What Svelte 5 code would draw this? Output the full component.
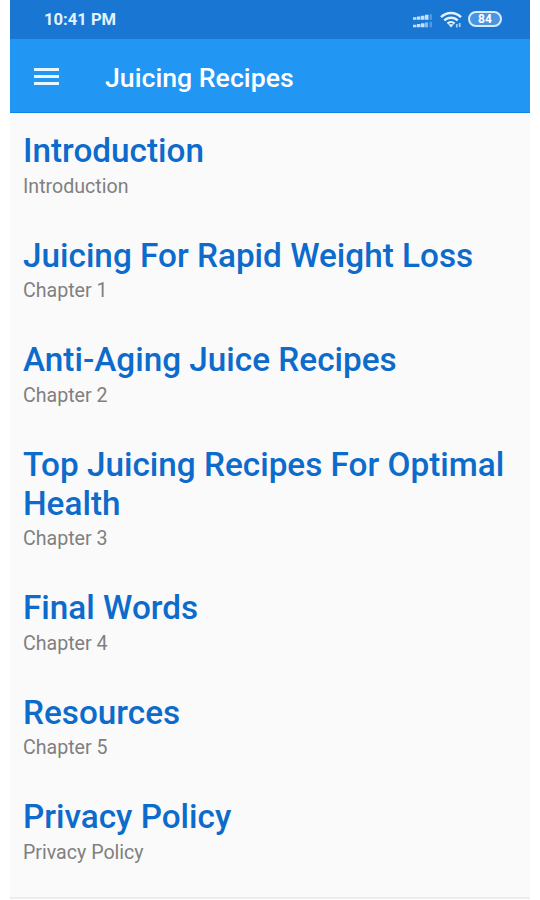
<script lang="ts">
    interface Chapter {
        title: string;
        subtitle: string;
    }

    const battery = 84;

    const chapters: Chapter[] = [
        { title: 'Introduction', subtitle: 'Introduction' },
        { title: 'Juicing For Rapid Weight Loss', subtitle: 'Chapter 1' },
        { title: 'Anti-Aging Juice Recipes', subtitle: 'Chapter 2' },
        { title: 'Top Juicing Recipes For Optimal Health', subtitle: 'Chapter 3' },
        { title: 'Final Words', subtitle: 'Chapter 4' },
        { title: 'Resources', subtitle: 'Chapter 5' },
        { title: 'Privacy Policy', subtitle: 'Privacy Policy' }
    ];
</script>

<div class="screen">
    <div class="status-bar">
        <span class="clock">10:41 PM</span>
        <div class="indicators">
            <svg class="signal" width="20" height="16" viewBox="0 0 20 16" fill="#d6ebff">
                <path d="M0 4.2h3.500v2.600H0zM4 3.500h3.500v3.300H4zM8 2.700h3.500v4.100H8zM12 1.800h3.500v5H12z" opacity=".9" />
                <path d="M0 11.700h3.500v2.600H0zM4 11h3.500v3.300H4zM8 10.200h3.500v4.100H8z" opacity=".9" />
                <path d="M12 9.400h3v4.900h-3z" opacity=".6" />
                <path d="M16.500 1.200H19v5.600h-2.500zM16.500 8.800H19v5.500h-2.500z" opacity=".3" />
            </svg>
            <svg class="wifi" width="22" height="18" viewBox="0 0 22 18" fill="none" stroke="#e3f2ff" stroke-width="2.4">
                <path d="M1 6.200C6.500.6 15.500.6 21 6.200" />
                <path d="M4.300 9.500c3.700-3.700 9.700-3.700 13.400 0" />
                <path d="M7.500 12.600c2-2 5-2 7 0" />
                <path d="M8.200 13.200h5.600L11 16.400z" fill="#e3f2ff" stroke="none" />
                <path d="M16.800 13v3.500M19.700 12v4" stroke-width="1.800" opacity=".7" />
            </svg>
            <span class="battery">{battery}</span>
        </div>
    </div>

    <header class="app-bar">
        <button class="menu" aria-label="Open menu">
            <span></span>
            <span></span>
            <span></span>
        </button>
        <h1>Juicing Recipes</h1>
    </header>

    <ul class="chapters">
        {#each chapters as chapter}
            <li>
                <h2>{chapter.title}</h2>
                <p>{chapter.subtitle}</p>
            </li>
        {/each}
    </ul>
</div>

<style>
    :global(body) {
        margin: 0;
        background: #fff;
    }

    .screen {
        box-sizing: border-box;
        display: flex;
        flex-direction: column;
        width: 520px;
        height: 900px;
        margin-left: 10px;
        overflow: hidden;
        background: #fff;
        font-family: Roboto, sans-serif;
    }

    .status-bar {
        box-sizing: border-box;
        display: flex;
        flex: none;
        align-items: center;
        justify-content: space-between;
        height: 39px;
        padding: 0 28px 0 34px;
        background: #1976d2;
    }

    .clock {
        font-size: 16.6px;
        font-weight: 700;
        line-height: 20px;
        color: #e3f2ff;
    }

    .indicators {
        display: flex;
        align-items: center;
    }

    .signal {
        margin: 2px 7px 0 0;
    }

    .wifi {
        margin: 0 6px 0 0;
    }

    .battery {
        box-sizing: border-box;
        width: 34px;
        height: 16px;
        margin-top: -1px;
        border: 2px solid #d6ebff;
        border-radius: 8px;
        background: #4b95e0;
        font-size: 12px;
        font-weight: 700;
        line-height: 12px;
        text-align: center;
        color: #fff;
    }

    .app-bar {
        box-sizing: border-box;
        display: flex;
        flex: none;
        align-items: center;
        height: 74px;
        padding: 0 24px;
        border-bottom: 1px solid #0c86ea;
        background: #2196f3;
    }

    .menu {
        display: flex;
        flex-direction: column;
        gap: 4px;
        width: 25px;
        margin: 2px 46px 0 0;
        padding: 0;
        border: none;
        background: none;
    }

    .menu span {
        height: 3px;
        background: #e8f7ff;
    }

    h1 {
        margin: 4px 0 0;
        font-size: 26.7px;
        font-weight: 500;
        line-height: 32px;
        color: #fff;
    }

    .chapters {
        flex: none;
        height: 786px;
        box-sizing: border-box;
        margin: 0;
        padding: 0;
        border-bottom: 2px solid #ececec;
        background: #fafafa;
        list-style: none;
    }

    li {
        padding: 18.4px 12px 19.6px 13px;
    }

    h2 {
        margin: 0 0 4.5px;
        font-size: 33.3px;
        font-weight: 500;
        line-height: 39px;
        color: #0d6bcb;
    }

    p {
        margin: 0;
        font-size: 19.6px;
        line-height: 23px;
        color: #808080;
    }
</style>
